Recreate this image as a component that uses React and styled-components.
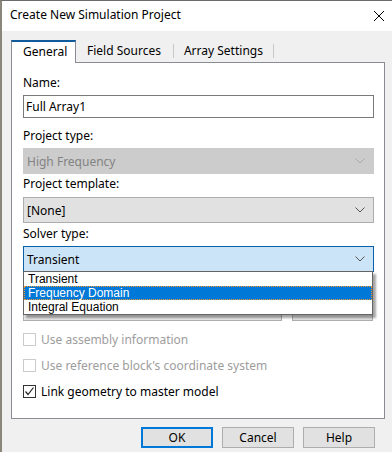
import React from "react";
import styled, { createGlobalStyle } from "styled-components";

const GlobalStyle = createGlobalStyle`
    html, body {
        margin: 0;
        padding: 0;
        background: #f0f0f0;
    }
    body {
        font-family: "Segoe UI", "Noto Sans", "Open Sans", sans-serif;
        font-size: 12px;
        color: #000;
    }
    * {
        box-sizing: border-box;
    }
`

const Window = styled.div`
    width: 392px;
    height: 452px;
    background: #f0f0f0;
    border-top: 1px solid #6b6b6b;
    border-left: 2px solid #8a867a;
    overflow: hidden;
    display: flex;
    flex-direction: column;
`

const TitleBar = styled.div`
    height: 30px;
    background: #fff;
    display: flex;
    align-items: center;
    justify-content: space-between;
    padding: 0 7px 0 8px;
    flex-shrink: 0;
`

const Title = styled.span`
    font-size: 12px;
    line-height: 16px;
    margin-top: -2px;
`

const Body = styled.div`
    padding: 9px 0 0 9px;
    display: flex;
    flex-direction: column;
`

const TabRow = styled.div`
    display: flex;
    align-items: flex-end;
    height: 22px;
`

const ActiveTab = styled.div`
    width: 65px;
    height: 23px;
    margin-bottom: -1px;
    background: #fff;
    border-top: 2px solid #0f5b9d;
    border-left: 1px solid #898c95;
    border-right: 1px solid #898c95;
    position: relative;
    z-index: 1;
    padding-left: 11px;
    line-height: 19px;
`

const Tab = styled.div`
    height: 14px;
    margin-bottom: 4px;
    line-height: 14px;
    padding: 0 ${({ $right }) => $right}px 0 ${({ $left }) => $left}px;
    border-right: 1px solid #c8c8c8;
    white-space: nowrap;
`

const Panel = styled.div`
    width: 374px;
    height: 357px;
    background: #fff;
    border: 1px solid #898c95;
    padding: 12px 10px 0 11px;
    display: flex;
    flex-direction: column;
`

const Label = styled.div`
    height: 16px;
    line-height: 16px;
    margin-top: ${({ $gap }) => $gap || 0}px;
    white-space: nowrap;
`

const TextInput = styled.div`
    height: 23px;
    margin-top: ${({ $gap }) => $gap || 0}px;
    border: 1px solid #7a7a7a;
    background: #fff;
    padding-left: 2px;
    line-height: 21px;
`

const Combo = styled.div`
    position: relative;
    height: 26px;
    margin-top: ${({ $gap }) => $gap || 0}px;
    border: 1px solid ${({ $variant }) =>
        $variant === "focus" ? "#0a5fa8" : $variant === "disabled" ? "#cccccc" : "#adadad"};
    background: ${({ $variant }) =>
        $variant === "focus" ? "#cce4f7" : $variant === "disabled" ? "#cccccc" : "#e1e1e1"};
    color: ${({ $variant }) => ($variant === "disabled" ? "#838383" : "#000")};
    display: flex;
    align-items: center;
    justify-content: space-between;
    padding: 0 8px 0 3px;
`

const DropList = styled.div`
    position: absolute;
    top: 100%;
    left: -1px;
    width: 350px;
    background: #fff;
    border: 1px solid #646464;
    box-shadow: 3px 3px 2px rgba(0, 0, 0, 0.35);
    z-index: 5;
`

const Option = styled.div`
    height: 14px;
    line-height: 12px;
    padding-left: 3px;
    font-family: "Liberation Sans", Arial, sans-serif;
    font-size: 12px;
    white-space: nowrap;
    background: ${({ $selected }) => ($selected ? "#0078d7" : "#fff")};
    color: ${({ $selected }) => ($selected ? "#fff" : "#000")};
    border: 1px dotted ${({ $selected }) => ($selected ? "#f19a2e" : "transparent")};
`

const HiddenRow = styled.div`
    display: flex;
    gap: 10px;
    height: 22px;
    margin-top: 27px;
`

const GreyBox = styled.div`
    width: 259px;
    border: 1px solid #adadad;
    background: #e5e5e5;
`

const SideButton = styled.div`
    width: 81px;
    border: 1px solid #adadad;
    background: #e1e1e1;
`

const CheckRow = styled.div`
    display: flex;
    align-items: center;
    gap: 5px;
    height: 16px;
    margin-top: 10px;
    color: ${({ $disabled }) => ($disabled ? "#9d9d9d" : "#000")};
    white-space: nowrap;
`

const Box = styled.div`
    width: 13px;
    height: 13px;
    border: 1px solid ${({ $disabled }) => ($disabled ? "#cccccc" : "#333333")};
    background: #fff;
    display: flex;
    align-items: center;
    justify-content: center;
`

const ButtonRow = styled.div`
    display: flex;
    justify-content: flex-end;
    gap: 9px;
    padding-right: 17px;
    margin-top: 8px;
`

const Button = styled.div`
    width: 72px;
    height: 21px;
    background: #e1e1e1;
    border: ${({ $primary }) => ($primary ? "2px solid #0078d7" : "1px solid #adadad")};
    display: flex;
    align-items: center;
    justify-content: center;
    line-height: 16px;
`

const Chevron = ({ color }) => (
    <svg width="10" height="6" viewBox="0 0 10 6">
        <path d="M0.5 0.5 L5 5 L9.5 0.5" fill="none" stroke={color} strokeWidth="1" />
    </svg>
)

const CloseIcon = () => (
    <svg width="12" height="12" viewBox="0 0 12 12">
        <path d="M1 1 L11 11 M11 1 L1 11" stroke="#000" strokeWidth="1" />
    </svg>
)

const Check = () => (
    <svg width="11" height="11" viewBox="0 0 11 11">
        <path d="M1.5 5.5 L4 8.5 L9.5 1.5" fill="none" stroke="#222" strokeWidth="1.2" />
    </svg>
)

const solverOptions = ["Transient", "Frequency Domain", "Integral Equation"]

const App = () => {
    return (
        <>
            <GlobalStyle />
            <Window>
                <TitleBar>
                    <Title>Create New Simulation Project</Title>
                    <CloseIcon />
                </TitleBar>
                <Body>
                    <TabRow>
                        <ActiveTab>General</ActiveTab>
                        <Tab $left={11} $right={12}>Field Sources</Tab>
                        <Tab $left={10} $right={10}>Array Settings</Tab>
                    </TabRow>
                    <Panel>
                        <Label>Name:</Label>
                        <TextInput $gap={4}>Full Array1</TextInput>
                        <Label $gap={10}>Project type:</Label>
                        <Combo $gap={4} $variant="disabled">
                            <span>High Frequency</span>
                            <Chevron color="#a8a8a8" />
                        </Combo>
                        <Label $gap={2}>Project template:</Label>
                        <Combo $gap={5}>
                            <span>[None]</span>
                            <Chevron color="#555" />
                        </Combo>
                        <Label $gap={3}>Solver type:</Label>
                        <Combo $gap={4} $variant="focus">
                            <span>Transient</span>
                            <Chevron color="#555" />
                            <DropList>
                                {solverOptions.map((opt) => (
                                    <Option key={opt} $selected={opt === "Frequency Domain"}>{opt}</Option>
                                ))}
                            </DropList>
                        </Combo>
                        <HiddenRow>
                            <GreyBox />
                            <SideButton />
                        </HiddenRow>
                        <CheckRow $disabled>
                            <Box $disabled />
                            Use assembly information
                        </CheckRow>
                        <CheckRow $disabled>
                            <Box $disabled />
                            Use reference block's coordinate system
                        </CheckRow>
                        <CheckRow>
                            <Box><Check /></Box>
                            Link geometry to master model
                        </CheckRow>
                    </Panel>
                    <ButtonRow>
                        <Button $primary>OK</Button>
                        <Button>Cancel</Button>
                        <Button>Help</Button>
                    </ButtonRow>
                </Body>
            </Window>
        </>
    )
}

export default App
